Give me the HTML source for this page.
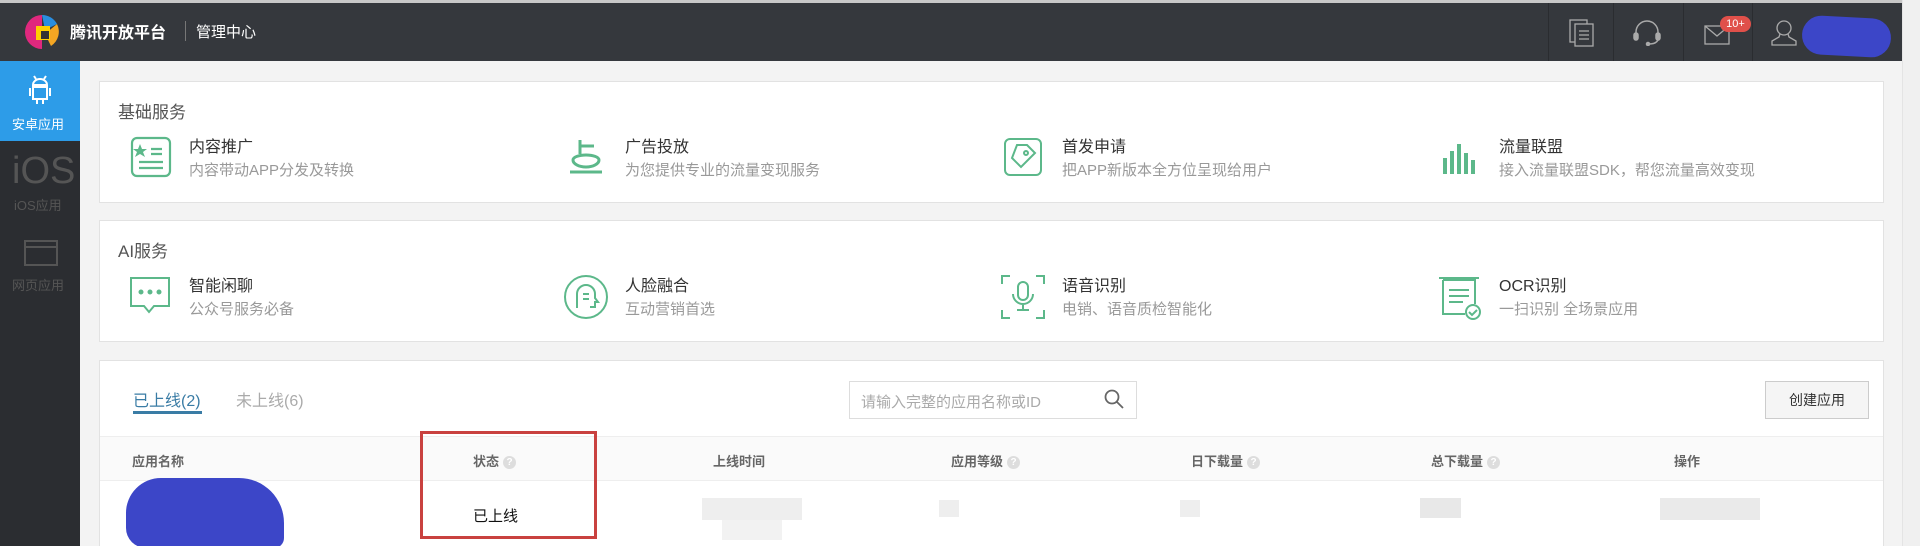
<!DOCTYPE html>
<html><head><meta charset="utf-8"><style>
*{margin:0;padding:0;box-sizing:border-box}
html,body{width:1920px;height:546px;overflow:hidden}
body{background:#f3f3f3;font-family:"Liberation Sans","Noto Sans CJK SC",sans-serif;position:relative}
.a{position:absolute}
.top{left:0;top:0;width:1902px;height:61px;background:#35383d;border-top:3px solid #c8c8c8}
.side{left:0;top:61px;width:80px;height:485px;background:#2b2d31}
.card{background:#fff;border:1px solid #e2e2e2}
.t{font-size:16px;color:#333;white-space:nowrap}
.s{font-size:15px;color:#999;white-space:nowrap}
.h{font-size:13px;color:#666;font-weight:bold;white-space:nowrap}
.q{display:inline-block;width:13px;height:13px;border-radius:50%;background:#ddd;color:#fff;font-size:10px;text-align:center;line-height:13px;vertical-align:1px;margin-left:4px}
.dv{top:3px;width:1px;height:58px;background:#2a2c30}
svg{position:absolute}
</style></head><body>
<div class="a top"></div>
<div class="a" style="left:1902px;top:0;width:18px;height:546px;background:#f0f0f0;border-left:1px solid #e4e4e4"></div>
<svg style="left:22px;top:12px" width="40" height="40" viewBox="0 0 40 40"><path d="M20 3a17 17 0 1 0 0 34" fill="#e0287e"/><path d="M20 3a17 17 0 0 1 15 9l-12 6z" fill="#2a8ee0"/><path d="M35 12a17 17 0 0 1-6 22l-6-12z" fill="#f5a623"/><rect x="14" y="14" width="14" height="14" fill="#ffd000"/><rect x="19" y="19" width="8" height="8" fill="#333"/></svg>
<div class="a" style="left:70px;top:19px;color:#fff;font-size:16px;font-weight:bold">腾讯开放平台</div>
<div class="a" style="left:185px;top:21px;width:1px;height:20px;background:#777"></div>
<div class="a" style="left:196px;top:21px;color:#fff;font-size:15px">管理中心</div>
<div class="a dv" style="left:1548px"></div><div class="a dv" style="left:1613px"></div><div class="a dv" style="left:1683px"></div><div class="a dv" style="left:1752px"></div>
<svg style="left:1569px;top:19px" width="26" height="28" viewBox="0 0 26 28" fill="none" stroke="#aaa" stroke-width="1.3"><rect x="1" y="1" width="17" height="22"/><rect x="6" y="5" width="18" height="22" fill="#35383d"/><path d="M10 12h10M10 16h10M10 20h10"/></svg>
<svg style="left:1633px;top:20px" width="28" height="26" viewBox="0 0 28 26" fill="none" stroke="#aaa" stroke-width="1.5"><path d="M3 16V12a11 11 0 0 1 22 0v4"/><rect x="1" y="13" width="4" height="7" rx="2" fill="#aaa"/><rect x="23" y="13" width="4" height="7" rx="2" fill="#aaa"/><path d="M25 20q-2 4-9 4"/><circle cx="15" cy="24" r="1.5" fill="#aaa"/></svg>
<svg style="left:1704px;top:25px" width="26" height="20" viewBox="0 0 26 20" fill="none" stroke="#aaa" stroke-width="1.3"><rect x="1" y="1" width="24" height="18"/><path d="M1 1l12 10 12-10"/></svg>
<div class="a" style="left:1720px;top:16px;width:31px;height:16px;border-radius:8px;background:#e0504a;color:#fff;font-size:11px;text-align:center;line-height:16px">10+</div>
<svg style="left:1771px;top:19px" width="26" height="28" viewBox="0 0 26 28" fill="none" stroke="#aaa" stroke-width="1.3"><circle cx="13" cy="9" r="7"/><path d="M9 15l-1 3-7 4v4h24v-4l-7-4-1-3"/></svg>
<div class="a" style="left:1802px;top:17px;width:89px;height:39px;border-radius:20px;background:#3c46c8;transform:rotate(3deg)"></div>
<div class="a side"></div>
<div class="a" style="left:0;top:61px;width:80px;height:80px;background:#2d9ce8"></div>
<svg style="left:28px;top:74px" width="24" height="32" viewBox="0 0 24 32" fill="none" stroke="#fff" stroke-width="2"><path d="M5 11a7 6 0 0 1 14 0z"/><path d="M6 2l2 3M18 2l-2 3"/><rect x="5" y="13" width="14" height="12"/><path d="M2 14v8M22 14v8M9 25v5M15 25v5"/></svg>
<div class="a" style="left:12px;top:114px;color:#fff;font-size:13px">安卓应用</div>
<div class="a" style="left:12px;top:150px;color:#555;font-size:38px;font-weight:300">iOS</div>
<div class="a" style="left:14px;top:195px;color:#555;font-size:13px">iOS应用</div>
<svg style="left:24px;top:240px" width="34" height="26" viewBox="0 0 34 26" fill="none" stroke="#555" stroke-width="2"><rect x="1" y="1" width="32" height="24"/><path d="M1 7h32"/></svg>
<div class="a" style="left:12px;top:275px;color:#555;font-size:13px">网页应用</div>
<div class="a card" style="left:99px;top:81px;width:1785px;height:122px"></div>
<div class="a" style="left:118px;top:98px;font-size:17px;color:#555">基础服务</div>
<svg style="left:130px;top:136px" width="42" height="42" viewBox="0 0 42 42" fill="none" stroke="#5cb88a" stroke-width="2.2"><rect x="2" y="2" width="38" height="38" rx="5"/><path d="M10 8l2 5h5l-4 3 2 5-5-3-5 3 2-5-4-3h5z" fill="#5cb88a" stroke="none"/><path d="M21 13h11M21 18h11M9 26h24M9 32h24"/></svg>
<svg style="left:565px;top:136px" width="42" height="42" viewBox="0 0 42 42" fill="none" stroke="#5cb88a" stroke-width="3"><path d="M15 4v14M15 10h14M8 24a13 7 0 0 0 26 0c0-3-6-5-13-5S8 21 8 24z"/><path d="M5 36h32"/></svg>
<svg style="left:1002px;top:136px" width="42" height="42" viewBox="0 0 42 42" fill="none" stroke="#5cb88a" stroke-width="2"><rect x="3" y="3" width="36" height="36" rx="5"/><path d="M25 9l8 8-14 14-9-9 5-13z"/><circle cx="24" cy="17" r="2"/></svg>
<svg style="left:1439px;top:136px" width="42" height="42" viewBox="0 0 42 42" fill="#5cb88a"><rect x="4" y="22" width="4" height="16"/><rect x="11" y="15" width="4" height="23"/><rect x="18" y="8" width="4" height="30"/><rect x="25" y="17" width="4" height="21"/><rect x="32" y="24" width="4" height="14"/></svg>
<div class="a t" style="left:189px;top:133px">内容推广</div><div class="a s" style="left:189px;top:159px">内容带动APP分发及转换</div>
<div class="a t" style="left:625px;top:133px">广告投放</div><div class="a s" style="left:625px;top:159px">为您提供专业的流量变现服务</div>
<div class="a t" style="left:1062px;top:133px">首发申请</div><div class="a s" style="left:1062px;top:159px">把APP新版本全方位呈现给用户</div>
<div class="a t" style="left:1499px;top:133px">流量联盟</div><div class="a s" style="left:1499px;top:159px">接入流量联盟SDK，帮您流量高效变现</div>
<div class="a card" style="left:99px;top:220px;width:1785px;height:122px"></div>
<div class="a" style="left:118px;top:237px;font-size:17px;color:#555">AI服务</div>
<svg style="left:128px;top:274px" width="44" height="44" viewBox="0 0 44 44" fill="none" stroke="#5cb88a" stroke-width="2"><path d="M3 4h38v28H26l-5 6-5-6H3z"/><circle cx="13" cy="18" r="1.5" fill="#5cb88a"/><circle cx="22" cy="18" r="1.5" fill="#5cb88a"/><circle cx="31" cy="18" r="1.5" fill="#5cb88a"/></svg>
<svg style="left:563px;top:274px" width="46" height="46" viewBox="0 0 46 46" fill="none" stroke="#5cb88a" stroke-width="2"><circle cx="23" cy="23" r="21"/><path d="M14 34V20a9 9 0 0 1 18 0v4l3 4h-3v5h-5"/><path d="M20 20h6M20 25h6"/></svg>
<svg style="left:1000px;top:274px" width="46" height="46" viewBox="0 0 46 46" fill="none" stroke="#5cb88a" stroke-width="2"><path d="M2 10V2h8M36 2h8v8M44 36v8h-8M10 44H2v-8"/><rect x="18" y="8" width="10" height="18" rx="5"/><path d="M13 20a10 10 0 0 0 20 0M23 30v6M17 36h12"/></svg>
<svg style="left:1437px;top:274px" width="46" height="46" viewBox="0 0 46 46" fill="none" stroke="#5cb88a" stroke-width="2"><path d="M6 6h32v24M6 6v34h22"/><path d="M2 4h40"/><path d="M12 16h20M12 22h20M12 28h14"/><circle cx="36" cy="38" r="7"/><path d="M32 38l3 3 5-5"/></svg>
<div class="a t" style="left:189px;top:272px">智能闲聊</div><div class="a s" style="left:189px;top:298px">公众号服务必备</div>
<div class="a t" style="left:625px;top:272px">人脸融合</div><div class="a s" style="left:625px;top:298px">互动营销首选</div>
<div class="a t" style="left:1062px;top:272px">语音识别</div><div class="a s" style="left:1062px;top:298px">电销、语音质检智能化</div>
<div class="a t" style="left:1499px;top:272px">OCR识别</div><div class="a s" style="left:1499px;top:298px">一扫识别 全场景应用</div>
<div class="a card" style="left:99px;top:360px;width:1785px;height:186px;border-bottom:none"></div>
<div class="a" style="left:133px;top:387px;font-size:16px;color:#3a7ca5">已上线(2)</div>
<div class="a" style="left:133px;top:411px;width:69px;height:3px;background:#3a7ca5"></div>
<div class="a" style="left:236px;top:387px;font-size:16px;color:#aaa">未上线(6)</div>
<div class="a" style="left:849px;top:381px;width:288px;height:38px;border:1px solid #ddd;background:#fff"></div>
<div class="a" style="left:861px;top:391px;font-size:15px;color:#aaa">请输入完整的应用名称或ID</div>
<svg style="left:1104px;top:389px" width="20" height="20" viewBox="0 0 20 20" fill="none" stroke="#666" stroke-width="1.8"><circle cx="8" cy="8" r="6.5"/><path d="M13 13l6 6"/></svg>
<div class="a" style="left:1765px;top:381px;width:104px;height:38px;border:1px solid #ccc;background:#f5f5f5;font-size:14px;color:#333;text-align:center;line-height:36px">创建应用</div>
<div class="a" style="left:100px;top:436px;width:1783px;height:45px;background:#fafafa;border-top:1px solid #eee;border-bottom:1px solid #eee"></div>
<div class="a h" style="left:132px;top:451px">应用名称</div>
<div class="a h" style="left:473px;top:451px">状态<span class="q">?</span></div>
<div class="a h" style="left:713px;top:451px">上线时间</div>
<div class="a h" style="left:951px;top:451px">应用等级<span class="q">?</span></div>
<div class="a h" style="left:1191px;top:451px">日下载量<span class="q">?</span></div>
<div class="a h" style="left:1431px;top:451px">总下载量<span class="q">?</span></div>
<div class="a h" style="left:1674px;top:451px">操作</div>
<div class="a" style="left:473px;top:505px;font-size:15px;color:#111">已上线</div>
<div class="a" style="left:420px;top:431px;width:177px;height:108px;border:3px solid #c9413f"></div>
<div class="a" style="left:126px;top:478px;width:158px;height:70px;border-radius:35px 45px 10px 20px;background:#3c46c8"></div>
<div class="a" style="left:702px;top:498px;width:100px;height:22px;background:#eee"></div>
<div class="a" style="left:722px;top:520px;width:60px;height:20px;background:#f2f2f2"></div>
<div class="a" style="left:939px;top:500px;width:20px;height:17px;background:#eee"></div>
<div class="a" style="left:1180px;top:500px;width:20px;height:17px;background:#eee"></div>
<div class="a" style="left:1420px;top:498px;width:41px;height:20px;background:#e8e8e8"></div>
<div class="a" style="left:1660px;top:498px;width:100px;height:22px;background:#eaeaea"></div>
</body></html>
